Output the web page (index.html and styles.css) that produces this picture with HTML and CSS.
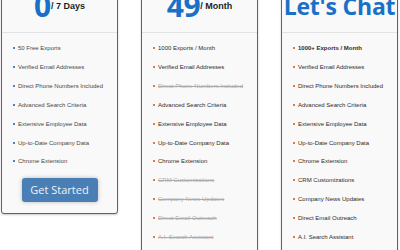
FILE: index.html
```html
<!DOCTYPE html>
<html>
<head>
<meta charset="utf-8">
<link rel="stylesheet" href="styles.css">
</head>
<body>
<div class="cards">
  <div class="card free">
    <div class="head"><span class="price">0</span><span class="per">/ 7 Days</span></div>
    <ul class="features">
      <li>50 Free Exports</li>
      <li>Verified Email Addresses</li>
      <li>Direct Phone Numbers Included</li>
      <li>Advanced Search Criteria</li>
      <li>Extensive Employee Data</li>
      <li>Up-to-Date Company Data</li>
      <li>Chrome Extension</li>
    </ul>
    <div class="action"><a class="btn">Get Started</a></div>
  </div>
  <div class="card paid">
    <div class="head"><span class="price">49</span><span class="per">/ Month</span></div>
    <ul class="features">
      <li>1000 Exports / Month</li>
      <li>Verified Email Addresses</li>
      <li class="off">Direct Phone Numbers Included</li>
      <li>Advanced Search Criteria</li>
      <li>Extensive Employee Data</li>
      <li>Up-to-Date Company Data</li>
      <li>Chrome Extension</li>
      <li class="off">CRM Customizations</li>
      <li class="off">Company News Updates</li>
      <li class="off">Direct Email Outreach</li>
      <li class="off">A.I. Search Assistant</li>
    </ul>
    <div class="action"><a class="btn">Get Started</a></div>
  </div>
  <div class="card paid">
    <div class="head"><span class="price chat">Let's Chat</span></div>
    <ul class="features">
      <li class="strong">1000+ Exports / Month</li>
      <li>Verified Email Addresses</li>
      <li>Direct Phone Numbers Included</li>
      <li>Advanced Search Criteria</li>
      <li>Extensive Employee Data</li>
      <li>Up-to-Date Company Data</li>
      <li>Chrome Extension</li>
      <li>CRM Customizations</li>
      <li>Company News Updates</li>
      <li>Direct Email Outreach</li>
      <li>A.I. Search Assistant</li>
    </ul>
    <div class="action"><a class="btn">Contact Us</a></div>
  </div>
</div>
</body>
</html>
```
FILE: styles.css
```css
html, body {
  margin: 0;
  padding: 0;
  background: #ffffff;
  overflow: hidden;
}

.cards {
  display: flex;
  align-items: flex-start;
  gap: 23px;
  padding-left: 1px;
  margin-top: -10px;
}

.card {
  width: 117px;
  flex: none;
  box-sizing: border-box;
  border: 1px solid #626262;
  border-radius: 3px;
  background: #f9f9f9;
  box-shadow: 0 1px 2px rgba(0, 0, 0, 0.22);
}

.head {
  height: 42px;
  box-sizing: border-box;
  padding-bottom: 11px;
  border-bottom: 1px solid #e3e3e3;
  display: flex;
  align-items: flex-end;
  justify-content: center;
  white-space: nowrap;
}

.price {
  font-family: "Open Sans", "Liberation Sans", sans-serif;
  font-weight: 700;
  font-size: 30px;
  line-height: 30px;
  color: #1a6fc6;
  letter-spacing: -0.3px;
}

.price.chat {
  font-size: 23px;
  line-height: 30px;
  letter-spacing: -0.2px;
}

.per {
  font-family: "Liberation Sans", Arial, sans-serif;
  font-weight: 700;
  font-size: 9px;
  line-height: 30px;
  color: #1e1e1e;
}

.features {
  list-style: none;
  margin: 0;
  padding: 6px 0 0 11px;
  font-family: "Liberation Sans", Arial, sans-serif;
  font-size: 6px;
  line-height: 18.9px;
  color: #2c2c2c;
  white-space: nowrap;
}

.free .features {
  color: #484848;
}

.features li::before {
  content: "";
  display: inline-block;
  width: 2px;
  height: 2px;
  margin-right: 3px;
  vertical-align: 1px;
  background: #e8773e;
}

.free .features li::before {
  background: #4f84bb;
}

.features li.off {
  color: #ababab;
  text-decoration: line-through;
}

.features li.strong {
  font-weight: 700;
}

.action {
  display: flex;
  justify-content: center;
  padding: 7px 0 11px;
}

.btn {
  display: block;
  width: 76px;
  height: 24px;
  border-radius: 3px;
  background: #4a7fb6;
  box-shadow: 0 0 4px rgba(0, 0, 0, 0.25);
  color: #eef3f9;
  font-family: "Open Sans", "Liberation Sans", sans-serif;
  font-size: 11px;
  line-height: 24px;
  text-align: center;
  text-decoration: none;
}
```
